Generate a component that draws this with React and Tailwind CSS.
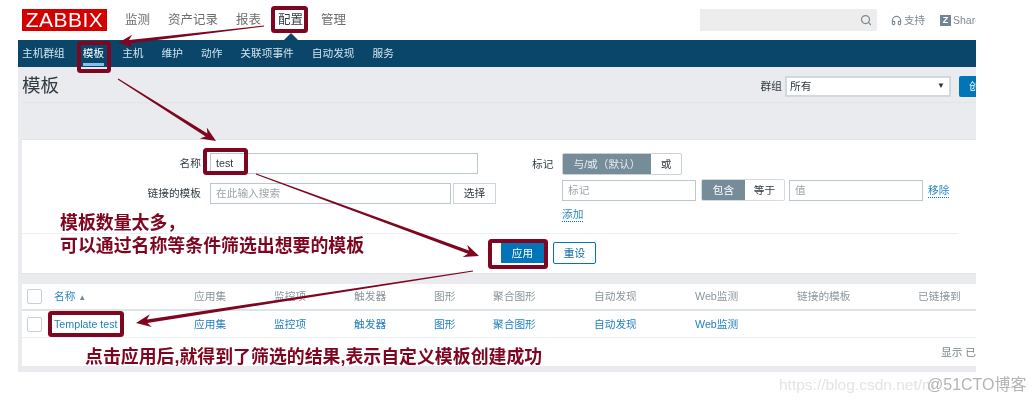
import React from 'react';
import { Search, Headphones } from 'lucide-react';

const FONT = '"Liberation Sans", "Noto Sans CJK SC", sans-serif';
const RED = '#7f0620';

const TOP_MENU = [
    { label: '监测', left: 125 },
    { label: '资产记录', left: 168 },
    { label: '报表', left: 236 },
    { label: '配置', left: 278, active: true },
    { label: '管理', left: 321 },
];

const SUB_MENU = ['主机群组', '模板', '主机', '维护', '动作', '关联项事件', '自动发现', '服务'];

const COLUMNS = ['应用集', '监控项', '触发器', '图形', '聚合图形', '自动发现', 'Web监测', '链接的模板', '已链接到'];
const LINKS = ['应用集', '监控项', '触发器', '图形', '聚合图形', '自动发现', 'Web监测', '', ''];

const GRID = 'grid grid-cols-[32px_140px_80px_80px_80px_59px_101px_101px_102px_121px_58px] items-center';

// Tapered arrow: thin tail, widening shaft, solid head
function arrowPoints([x1, y1], [x2, y2], headLen = 15, headW = 6.5, shaft = 3.4, tail = 1) {
    const len = Math.hypot(x2 - x1, y2 - y1);
    const ux = (x2 - x1) / len;
    const uy = (y2 - y1) / len;
    const nx = -uy;
    const ny = ux;
    const bx = x2 - ux * headLen;
    const by = y2 - uy * headLen;
    const nbx = x2 - ux * headLen * 0.75;
    const nby = y2 - uy * headLen * 0.75;
    const s = shaft / 2;
    const t = tail / 2;
    const pts = [
        [x1 + nx * t, y1 + ny * t],
        [nbx + nx * s, nby + ny * s],
        [bx + nx * headW, by + ny * headW],
        [x2, y2],
        [bx - nx * headW, by - ny * headW],
        [nbx - nx * s, nby - ny * s],
        [x1 - nx * t, y1 - ny * t],
    ];
    return pts.map((p) => p.map((v) => v.toFixed(1)).join(',')).join(' ');
}

const ARROWS = [
    [[264, 26], [118, 43]],
    [[118, 79], [216, 141]],
    [[256, 174], [479, 256]],
    [[473, 271], [136, 323]],
];

const BOXES = [
    [273, 8, 33, 23],
    [79, 43, 30, 28],
    [205, 150, 41, 23],
    [490, 241, 56, 26],
    [50, 313, 72, 22],
];

function Annotations() {
    return (
        <svg className="absolute left-0 top-0 pointer-events-none" width="1036" height="403">
            {ARROWS.map(([from, to], i) => (
                <polygon key={i} points={arrowPoints(from, to)} fill={RED} />
            ))}
            {BOXES.map(([x, y, w, h], i) => (
                <rect key={i} x={x} y={y} width={w} height={h} rx="1.5" fill="none" stroke={RED} strokeWidth="4" />
            ))}
        </svg>
    );
}

function TopBar() {
    return (
        <div className="relative h-10 w-[976px] overflow-hidden bg-white">
            <div className="absolute left-[22px] top-[9px] flex h-[22px] w-[85px] items-center justify-center bg-[#d40000] text-[21px] tracking-[0.5px] text-white">
                ZABBIX
            </div>
            {TOP_MENU.map((item) => (
                <span
                    key={item.label}
                    className={`absolute top-[11px] text-[12.5px] leading-[18px] ${item.active ? 'text-[#2f3b42]' : 'text-[#6d6d6d]'}`}
                    style={{ left: item.left }}
                >
                    {item.label}
                </span>
            ))}
            <div className="absolute left-[291px] top-[33px] h-0 w-0 -translate-x-1/2 border-x-[7px] border-b-[7px] border-x-transparent border-b-[#0a466a]" />
            <div className="absolute left-[700px] top-[9px] flex h-[22px] w-[177px] items-center justify-end bg-[#ededed] pr-[5px]">
                <Search size={12} strokeWidth={2.5} className="text-[#7c8b94]" />
            </div>
            <div className="absolute left-[891px] top-[13px] flex items-center gap-[2px] text-[10.5px] leading-[14px] text-[#7c8b94]">
                <Headphones size={11} strokeWidth={2.5} />
                <span>支持</span>
            </div>
            <div className="absolute left-[940px] top-[14px] flex items-center gap-[2px] text-[10.5px] leading-[12px] text-[#7c8b94]">
                <span className="flex h-[11px] w-[11px] items-center justify-center bg-[#6f8591] text-[9px] font-bold text-white">Z</span>
                <span>Share</span>
            </div>
        </div>
    );
}

function SubNav() {
    return (
        <div className="flex h-[27px] items-center gap-[18px] bg-[#0a466a] pl-1 text-[10.7px] text-[#d4e3ec]">
            {SUB_MENU.map((label) => (
                <span key={label} className={`relative leading-[27px] ${label === '模板' ? 'text-white' : ''}`}>
                    {label}
                    {label === '模板' && <span className="absolute bottom-[1px] left-0 h-[3px] w-full bg-[#7fc3ec]" />}
                </span>
            ))}
        </div>
    );
}

function TitleRow() {
    return (
        <div className="ml-1 flex h-9 items-center justify-between border-b border-[#e0e4e7] pt-[3px]">
            <div className="text-[18.5px] leading-[24px] text-[#2f3b42]">模板</div>
            <div className="flex items-center text-[10.7px] text-[#2f3b42]">
                <span>群组</span>
                <div className="ml-[3px] flex h-[21px] w-[166px] items-center justify-between border-2 border-[#d0d9df] bg-white pl-[3px] pr-[4px]">
                    <span>所有</span>
                    <span className="text-[8px] text-[#333]">▼</span>
                </div>
                <div className="ml-2 h-[21px] w-[17px] overflow-hidden rounded-l-[2px] bg-[#0275b8] pl-[10px] leading-[21px] whitespace-nowrap text-white">
                    创建模板
                </div>
            </div>
        </div>
    );
}

const inputClass = 'flex h-[21px] items-center border border-[#b9c7cf] bg-white pl-[5px] text-[10.7px]';

function FilterPanel() {
    return (
        <div className="ml-1 flex h-[135px] flex-col border-y border-[#dfe4e7] bg-white text-[10.7px] text-[#2f3b42]">
            <div className="flex h-[93px] pt-[13px]">
                <div className="flex w-[510px] flex-col gap-[9px]">
                    <div className="flex items-center">
                        <span className="w-[179px] text-right">名称</span>
                        <div className={`ml-[9px] w-[268px] ${inputClass}`}>test</div>
                    </div>
                    <div className="flex items-center">
                        <span className="w-[179px] text-right">链接的模板</span>
                        <div className={`ml-[9px] w-[241px] text-[#9aa5ab] ${inputClass}`}>在此输入搜索</div>
                        <div className="ml-[2px] flex h-[21px] w-[43px] items-center justify-center border border-[#ccd5da]">选择</div>
                    </div>
                </div>
                <div className="flex items-start">
                    <span className="mt-[3px] w-[22px]">标记</span>
                    <div className="ml-2 flex flex-col">
                        <div className="flex h-[22px] w-[120px] overflow-hidden rounded-[2px] border border-[#c7d2d8]">
                            <span className="flex w-[88px] items-center justify-center bg-[#768d99] text-[#e6ecef]">与/或（默认）</span>
                            <span className="flex flex-1 items-center justify-center">或</span>
                        </div>
                        <div className="mt-[4px] flex items-center">
                            <div className={`w-[134px] text-[#9aa5ab] ${inputClass}`}>标记</div>
                            <div className="ml-[5px] flex h-[22px] w-[84px] overflow-hidden rounded-[2px] border border-[#d5dde2]">
                                <span className="flex w-[43px] items-center justify-center bg-[#768d99] text-white">包含</span>
                                <span className="flex flex-1 items-center justify-center">等于</span>
                            </div>
                            <div className={`ml-[4px] w-[134px] text-[#9aa5ab] ${inputClass}`}>值</div>
                            <span className="ml-[5px] border-b border-dotted border-[#0275b8] leading-[14px] text-[#2a85c0]">移除</span>
                        </div>
                        <span className="mt-[6px] w-fit border-b border-dotted border-[#0275b8] leading-[14px] text-[#2a85c0]">添加</span>
                    </div>
                </div>
            </div>
            <div className="mr-[18px] flex h-[39px] items-start border-t border-[#edf0f2] pl-[479px] pt-[9px]">
                <div className="flex h-5 w-[43px] items-center justify-center bg-[#0275b8] text-white">应用</div>
                <div className="ml-[9px] flex h-[22px] w-[43px] -translate-y-px items-center justify-center rounded-[2px] border border-[#0275b8] text-[#0a6aa5]">重设</div>
            </div>
        </div>
    );
}

function Checkbox() {
    return <div className="ml-[5px] h-[15px] w-[15px] rounded-[2px] border border-[#c6d0d6] bg-white" />;
}

function ResultTable() {
    return (
        <div className="ml-1 mt-[10px] h-[82px] bg-white text-[10.7px]">
            <div className={`${GRID} h-[27px] border-b-2 border-[#dfe4e7] text-[#8a969c]`}>
                <Checkbox />
                <span className="text-[#2a85c0]">
                    名称 <span className="text-[8px] text-[#768d99]">▲</span>
                </span>
                {COLUMNS.map((col) => (
                    <span key={col} className="whitespace-nowrap">{col}</span>
                ))}
            </div>
            <div className={`${GRID} h-[27px] border-b border-[#edf0f2] text-[#1f7fc0]`}>
                <Checkbox />
                <span>Template test</span>
                {LINKS.map((col, i) => (
                    <span key={i} className="whitespace-nowrap">{col}</span>
                ))}
            </div>
            <div className="relative h-[28px]">
                <span className="absolute right-0 top-[6px] w-[35px] overflow-hidden whitespace-nowrap text-[#768289]">显示 已</span>
            </div>
        </div>
    );
}

export default function App() {
    return (
        <div className="relative h-[403px] w-[1036px] overflow-hidden bg-white blur-[0.35px]" style={{ fontFamily: FONT }}>
            <TopBar />
            <div className="ml-[18px] w-[958px] overflow-hidden">
                <SubNav />
                <div className="h-[305px] bg-[#e9ebee]">
                    <TitleRow />
                    <div className="h-9" />
                    <FilterPanel />
                    <ResultTable />
                </div>
            </div>

            <div className="absolute left-[60px] top-[212px] text-[17.9px] leading-[23px] font-bold text-[#7f0620]">
                <div>模板数量太多，</div>
                <div>可以通过名称等条件筛选出想要的模板</div>
            </div>
            <div className="absolute left-[85px] top-[346px] whitespace-nowrap text-[17.9px] leading-[23px] font-bold text-[#7f0620]">
                点击应用后,就得到了筛选的结果,表示自定义模板创建成功
            </div>

            <Annotations />

            <div className="absolute left-[779px] top-[375px] whitespace-nowrap text-[15.5px] leading-[20px] text-[#e4e4e4]">
                https://blog.csdn.net/m
            </div>
            <div className="absolute left-[927px] top-[375px] whitespace-nowrap text-[16px] leading-[20px] text-[#b4b4b4]">
                @51CTO博客
            </div>
        </div>
    );
}
